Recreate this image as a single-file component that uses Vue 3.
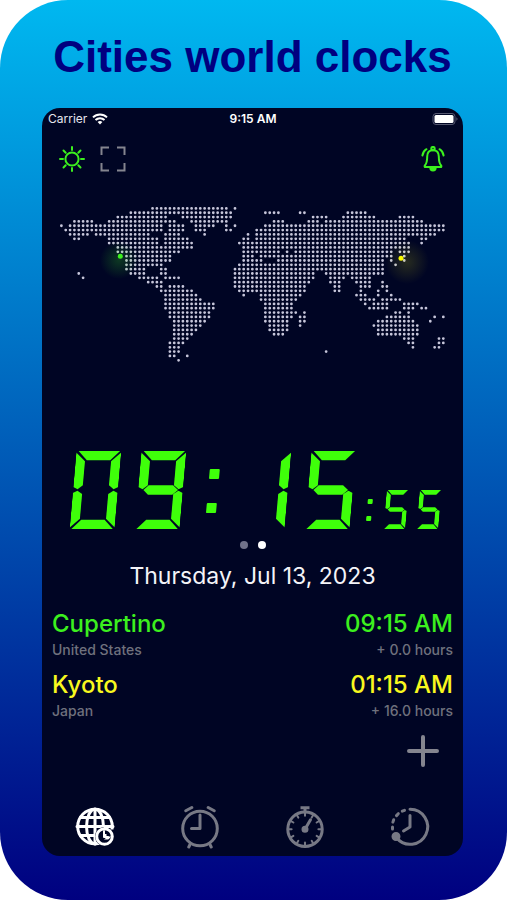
<template>
  <main class="poster">
    <h1 class="poster-title">Cities world clocks</h1>

    <section class="screen">
      <!-- Status bar -->
      <div class="status-bar">
        <div class="status-left">
          <span>Carrier</span>
          <svg class="wifi" viewBox="0 0 16 12" aria-hidden="true">
            <path d="M1 4.4a10 10 0 0 1 14 0" />
            <path d="M3.5 7a6.4 6.4 0 0 1 9 0" />
            <path class="wifi-tip" d="M8 11.6L5.6 9.1a3.4 3.4 0 0 1 4.8 0z" />
          </svg>
        </div>
        <strong class="status-time">9:15 AM</strong>
        <div class="status-right">
          <svg class="battery" viewBox="0 0 26 12" aria-hidden="true">
            <rect class="battery-shell" x="1" y="0.5" width="22" height="11" rx="3" />
            <rect class="battery-level" x="2.5" y="2" width="19" height="8" rx="1.5" />
            <path class="battery-nub" d="M24.4 4.2v3.6a2 2 0 0 0 0-3.6z" />
          </svg>
        </div>
      </div>

      <!-- Toolbar -->
      <div class="toolbar">
        <button class="icon-btn green" type="button" aria-label="Brightness">
          <svg viewBox="0 0 26 26">
            <circle cx="13" cy="13" r="6.6" />
            <path d="M13 1v3M13 22v3M1 13h3M22 13h3M4.5 4.5l2.2 2.2M19.3 19.3l2.2 2.2M4.5 21.5l2.2-2.2M19.3 6.7l2.2-2.2" />
          </svg>
        </button>
        <button class="icon-btn grey" type="button" aria-label="Full screen">
          <svg class="square" viewBox="0 0 26 26">
            <path d="M1.5 9V1.5H9M17 1.5h7.5V9M24.5 17v7.5H17M9 24.5H1.5V17" />
          </svg>
        </button>
        <button class="icon-btn green bell" type="button" aria-label="Alarms">
          <svg viewBox="0 0 26 26">
            <circle cx="13" cy="2.6" r="1.7" />
            <path d="M13 4.2c-3.8 0-5.8 2.6-5.8 6.3 0 5-.4 6.800-2.300 9-.6.700-.3 1.600.6 1.600h15c.9 0 1.200-.9.6-1.600-1.900-2.200-2.300-4-2.300-9 0-3.700-2-6.300-5.800-6.300z" />
            <path class="solid" d="M10.3 21.600a2.700 3 0 0 0 5.400 0z" />
            <path d="M6.500 3.200C4.200 4.500 2.900 6.600 2.400 9.500M19.500 3.200c2.300 1.300 3.600 3.400 4.100 6.300" />
          </svg>
        </button>
      </div>

      <!-- Dotted world map -->
      <svg class="map" viewBox="0 0 385 156" role="img" aria-label="World map">
        <defs>
          <radialGradient id="glow-green">
            <stop offset="0" stop-color="#3cf01e" stop-opacity="0.22" />
            <stop offset="1" stop-color="#3cf01e" stop-opacity="0" />
          </radialGradient>
          <radialGradient id="glow-yellow">
            <stop offset="0" stop-color="#f5f50a" stop-opacity="0.16" />
            <stop offset="1" stop-color="#f5f50a" stop-opacity="0" />
          </radialGradient>
        </defs>
        <path class="land" :d="landPath" />
        <circle cx="59" cy="53" r="19" fill="url(#glow-green)" />
        <circle cx="347" cy="55" r="22" fill="url(#glow-yellow)" />
        <circle cx="60.3" cy="49.3" r="2.5" fill="#3cf01e" />
        <circle cx="341" cy="51.3" r="2.5" fill="#f8f800" />
      </svg>

      <!-- Digital clock -->
      <time class="clock" datetime="09:15:55" aria-label="09:15:55">
        <template v-for="(group, g) in clockGroups" :key="g">
          <span v-if="g > 0" class="colon" :class="{ small: group.small }"><i></i><i></i></span>
          <span
            v-for="(digit, i) in group.value"
            :key="`${g}-${i}`"
            class="digit"
            :class="{ small: group.small }"
          >
            <i v-for="seg in SEGMENTS[digit]" :key="seg" :class="`seg-${seg}`"></i>
          </span>
        </template>
      </time>

      <div class="pager">
        <button type="button" aria-label="Page 1"></button>
        <button type="button" aria-label="Page 2" class="active"></button>
      </div>

      <p class="date">Thursday, Jul 13, 2023</p>

      <!-- Cities -->
      <ul class="cities">
        <li v-for="city in cities" :key="city.name" class="city">
          <div class="city-line" :class="city.color">
            <span>{{ city.name }}</span>
            <span>{{ city.time }}</span>
          </div>
          <div class="city-sub">
            <span>{{ city.country }}</span>
            <span>{{ city.offset }}</span>
          </div>
        </li>
      </ul>

      <button class="add-btn" type="button" aria-label="Add city">
        <svg viewBox="0 0 34 34"><path d="M17 3v28M3 17h28" /></svg>
      </button>

      <!-- Tabs -->
      <nav class="tabs">
        <button class="tab active" type="button" aria-label="World clock">
          <svg viewBox="0 0 44 44">
            <defs>
              <mask id="globe-cut">
                <rect width="44" height="44" fill="#fff" />
                <circle cx="31.5" cy="31.5" r="11" fill="#000" />
                <rect x="32" y="23" width="12" height="10" fill="#000" />
              </mask>
            </defs>
            <g mask="url(#globe-cut)">
              <circle cx="22" cy="21.5" r="17.3" />
              <ellipse cx="22" cy="21.5" rx="8.5" ry="17.3" />
              <path d="M22 4v35M4 21.5h36M7.5 12.5h29M7.5 30.5h29" />
            </g>
            <circle cx="31.5" cy="31.5" r="7.8" />
            <path d="M31 26.5v5.500h4" class="thin" />
          </svg>
        </button>
        <button class="tab" type="button" aria-label="Alarm">
          <svg viewBox="0 0 44 44">
            <circle cx="22" cy="23.5" r="17.3" />
            <path d="M22 10v13.5h-8.500M7.800 5.800l6-3.300M36.200 5.800l-6-3.300M12.500 38.500l-1.700 3.500M31.500 38.500l1.700 3.500" />
          </svg>
        </button>
        <button class="tab" type="button" aria-label="Stopwatch">
          <svg viewBox="0 0 44 44">
            <circle cx="22" cy="24.2" r="17.2" />
            <path class="square" d="M17.500 2.700h9M22 3v4" />
            <path d="M22 24.200l5.500-9.500" />
            <path
              v-for="n in 12"
              :key="n"
              class="thin"
              d="M22 8v2.8"
              :transform="`rotate(${n * 30} 22 24.2)`"
            />
            <circle class="solid" cx="22" cy="24.2" r="2" />
          </svg>
        </button>
        <button class="tab" type="button" aria-label="Timer">
          <svg viewBox="0 0 44 44">
            <path d="M22 4.300a17.500 17.500 0 1 1-13.500 28.500" />
            <path d="M16.500 5.300l-2.200.9M10.300 8.700l-1.800 1.900M5.700 14.700l-.8 2.400M4.500 22v2" />
            <path d="M22 10.500v11.500l-6.500 4" />
            <circle class="solid" cx="8" cy="31.5" r="3" />
          </svg>
        </button>
      </nav>
    </section>
  </main>
</template>

<script setup>
import { computed } from "vue";

// Columns with land, one entry per row from north to south
const LAND = [
  "21-38 40",
  "16-39 47-50 55-56 66-70",
  "13-24 28-39 58-61 65-72 78-81",
  "3-7 11-26 30-38 49-51 57-59 61-83",
  "0 2-23 25-28 31-35 38 40 47-88",
  "1-23 25-28 31-33 38-39 45-88",
  "2-6 8-20 24-27 33 43 45-86",
  "3-4 11-22 24-29 42-43 45-79 83-84",
  "11-22 24-30 41-80 83",
  "13-30 42-80",
  "13-27 42-50 52 54-76 78-80",
  "15-25 42-44 46-76 79",
  "15-25 42-46 50-74 76 79",
  "15-23 41-74 77",
  "15-19 23-24 40-74",
  "4 16-19 23-24 40-58 61-74",
  "5 18-22 24-27 40-58 62-65 67-71",
  "20-23 40-57 62-64 68-71 74",
  "22-23 25-28 40-56 63-64 69-71 74-75",
  "23-30 41-56 63-64 69 73 75",
  "24-31 42 46-55 68-70 73 76",
  "24-32 46-54 69-72 74-78",
  "24-35 47-53 70 72-75 79-82",
  "24-35 47-53 71-75 79-81 83-84",
  "25-34 47-54 56 77-78 80",
  "25-34 47-53 55-56 75-80 86 88",
  "26-33 47-52 55-56 73-81 85",
  "26-32 48-52 55 72-82",
  "26-31 48-52 73-82",
  "26-30 49-51 73-82",
  "26-29 79-81 87-88",
  "25-28 80-81 87-88",
  "25-27 81 86-87",
  "25-27 61",
  "25-26 29",
  "27",
];

const PITCH = 4.34;

const landPath = computed(() => {
  let d = "";
  LAND.forEach((row, r) => {
    row.split(" ").forEach((range) => {
      const [from, to = from] = range.split("-").map(Number);
      for (let c = from; c <= to; c++) {
        d += `M${(1.4 + c * PITCH).toFixed(2)} ${(1.4 + r * PITCH).toFixed(2)}h0`;
      }
    });
  });
  return d;
});

const SEGMENTS = {
  0: "abcdef",
  1: "bc",
  5: "acdfg",
  9: "abcdfg",
};

const clockGroups = [
  { value: "09", small: false },
  { value: "15", small: false },
  { value: "55", small: true },
];

const cities = [
  { name: "Cupertino", country: "United States", time: "09:15 AM", offset: "+ 0.0 hours", color: "green" },
  { name: "Kyoto", country: "Japan", time: "01:15 AM", offset: "+ 16.0 hours", color: "yellow" },
];
</script>

<style>
body {
  margin: 0;
  background: #fff;
}
</style>

<style scoped>
.poster {
  box-sizing: border-box;
  min-height: 100vh;
  padding: 0 44px 44px 42px;
  display: flex;
  flex-direction: column;
  border-radius: 68px;
  background: linear-gradient(#00b8f0, #000080);
  font-family: Inter, "Liberation Sans", sans-serif;
}

.poster-title {
  margin: 0;
  padding: 33px 0 27px;
  font-family: "Arial Rounded MT Bold", "Liberation Sans", sans-serif;
  font-size: 44px;
  line-height: 48px;
  font-weight: 700;
  text-align: center;
  white-space: nowrap;
  color: #000080;
}

.screen {
  flex: 1;
  display: flex;
  flex-direction: column;
  border-radius: 18px;
  background: #000524;
  color: #fff;
  overflow: hidden;
}

button {
  padding: 0;
  border: none;
  background: none;
  color: inherit;
  cursor: pointer;
}

svg {
  display: block;
  fill: none;
  stroke: currentColor;
  stroke-linecap: round;
  stroke-linejoin: round;
}

.solid {
  fill: currentColor;
}

/* Status bar */
.status-bar {
  display: grid;
  grid-template-columns: 1fr auto 1fr;
  align-items: center;
  padding: 2px 5px 0 6px;
  font-size: 12px;
  line-height: 18px;
}

.status-left {
  display: flex;
  align-items: center;
  gap: 5px;
  color: #e6e6ee;
}

.status-time {
  font-weight: 600;
}

.status-right {
  display: flex;
  justify-content: flex-end;
}

.wifi {
  width: 16px;
  height: 12px;
  color: #fff;
  stroke-width: 2;
  stroke-linecap: butt;
}

.wifi-tip {
  fill: currentColor;
  stroke: none;
}

.battery {
  width: 26px;
  height: 12px;
}

.battery-shell {
  stroke: #555870;
}

.battery-level {
  fill: #fff;
  stroke: none;
}

.battery-nub {
  fill: #555870;
  stroke: none;
}

/* Toolbar */
.toolbar {
  display: flex;
  gap: 15px;
  padding: 18px 17px 35px;
}

.icon-btn svg {
  width: 26px;
  height: 26px;
  stroke-width: 2;
}

.bell {
  margin-left: auto;
}

.square {
  stroke-linecap: butt;
  stroke-linejoin: miter;
}

.green {
  color: #3cf01e;
}

.yellow {
  color: #f8f81e;
}

.grey {
  color: #84858f;
}

/* Map */
.map {
  margin: 0 18px;
  overflow: visible;
  stroke: none;
}

.land {
  stroke: #c6c6da;
  stroke-width: 2.8;
}

/* Digital clock */
.clock {
  display: flex;
  justify-content: center;
  align-items: flex-end;
  margin-top: 88px;
  padding-left: 2px;
  color: #3fff0a;
}

.digit {
  display: grid;
  width: 45px;
  height: 78px;
  margin: 0 10px;
  transform: skewX(-5deg);
}

.digit.small {
  width: 22px;
  height: 39px;
  margin: 0 5px 0 6px;
}

.digit i {
  grid-area: 1 / 1;
  background: currentColor;
}

.seg-a {
  clip-path: polygon(5% 0, 97% 0, 77% 12%, 25% 12%);
}

.seg-b {
  clip-path: polygon(100% 2%, 79% 13%, 79% 44%, 90% 49%, 100% 46%);
}

.seg-c {
  clip-path: polygon(100% 98%, 79% 87%, 79% 55%, 90% 51%, 100% 54%);
}

.seg-d {
  clip-path: polygon(4% 100%, 96% 100%, 76% 88%, 24% 88%);
}

.seg-e {
  clip-path: polygon(0 98%, 21% 87%, 21% 55%, 10% 51%, 0 54%);
}

.seg-f {
  clip-path: polygon(0 2%, 21% 13%, 21% 44%, 10% 49%, 0 46%);
}

.seg-g {
  clip-path: polygon(12% 50%, 23% 44%, 77% 44%, 89% 50%, 77% 56%, 23% 56%);
}

.colon {
  box-sizing: border-box;
  display: flex;
  flex-direction: column;
  align-items: center;
  justify-content: space-between;
  width: 40px;
  height: 78px;
  padding: 18px 0 16px;
  transform: skewX(-5deg);
}

.colon i {
  width: 10px;
  height: 10px;
  border-radius: 1px;
  background: currentColor;
}

.colon.small {
  width: 16px;
  height: 39px;
  padding: 9px 4px 8px 0;
}

.colon.small i {
  width: 5px;
  height: 5px;
}

.pager {
  display: flex;
  justify-content: center;
  gap: 10px;
  margin-top: 12px;
}

.pager button {
  width: 8px;
  height: 8px;
  border-radius: 50%;
  background: #70728a;
}

.pager .active {
  background: #fff;
}

.date {
  margin: 12px 0 0;
  font-size: 23px;
  line-height: 30px;
  text-align: center;
  color: #f4f4f8;
}

/* Cities */
.cities {
  list-style: none;
  margin: 18px 0 0;
  padding: 0 10px;
}

.city {
  padding-bottom: 11px;
}

.city-line,
.city-sub {
  display: flex;
  justify-content: space-between;
}

.city-line {
  font-size: 24px;
  line-height: 30px;
  font-weight: 500;
}

.city-sub {
  padding-top: 2px;
  font-size: 14px;
  line-height: 18px;
  font-weight: 500;
  color: #6f717d;
}

.add-btn {
  align-self: flex-end;
  margin: 3px 23px 0 0;
  color: #84858f;
}

.add-btn svg {
  width: 34px;
  height: 34px;
  stroke-width: 4;
}

/* Tabs */
.tabs {
  display: grid;
  grid-template-columns: repeat(4, 1fr);
  margin-top: auto;
  padding-bottom: 7px;
}

.tab {
  display: flex;
  justify-content: center;
  color: #777985;
}

.tab.active {
  color: #fff;
}

.tab svg {
  width: 44px;
  height: 44px;
  stroke-width: 3;
}

.tab .thin {
  stroke-width: 2;
}
</style>
